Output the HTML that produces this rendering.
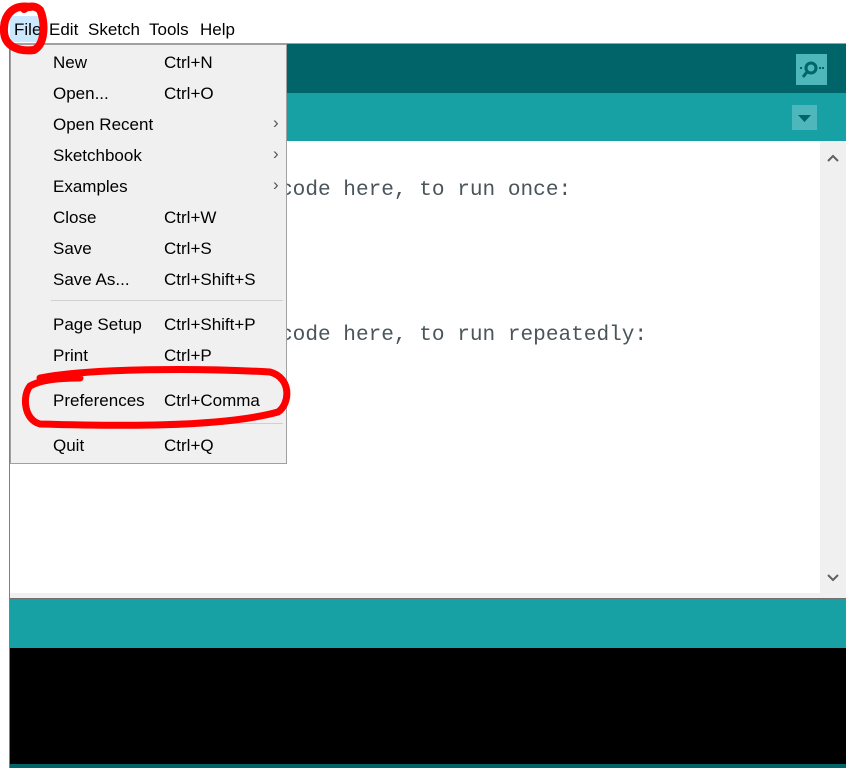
<!DOCTYPE html>
<html><head><style>
body{margin:0;width:846px;height:768px;position:relative;overflow:hidden;background:#fff;font-family:"Liberation Sans",sans-serif}
.a{position:absolute}
.menu span{position:absolute;font-size:17px;color:#000}
.code{position:absolute;font-family:"Liberation Mono",monospace;font-size:21.1px;color:#4a555a;white-space:pre}
</style></head><body>
<div class="a" style="left:9px;top:43px;width:837px;height:1px;background:#a0a0a0"></div>
<div class="a" style="left:9px;top:44px;width:1px;height:724px;background:#808080"></div>
<div class="a" style="left:10px;top:44px;width:836px;height:49px;background:#006468"></div>
<div class="a" style="left:796px;top:54px;width:31px;height:31px;background:#4db7bb"></div>
<svg class="a" style="left:796px;top:54px" width="31" height="31"><circle cx="15" cy="14" r="5" fill="none" stroke="#006468" stroke-width="3"/><line x1="11" y1="18" x2="7" y2="23" stroke="#006468" stroke-width="3"/><rect x="4" y="13" width="2" height="2" fill="#006468"/><rect x="23" y="13" width="2" height="2" fill="#006468"/><rect x="26" y="13" width="2" height="2" fill="#006468"/></svg>
<div class="a" style="left:10px;top:93px;width:836px;height:48px;background:#17a1a5"></div>
<div class="a" style="left:792px;top:105px;width:25px;height:25px;background:#4db7bb"></div>
<svg class="a" style="left:792px;top:105px" width="25" height="25"><path d="M6 10 L19 10 L12.5 17Z" fill="#006468"/></svg>
<div class="a" style="left:820px;top:141px;width:26px;height:452px;background:#f0f0f0"></div>
<svg class="a" style="left:820px;top:141px" width="26" height="452"><path d="M8 20 L13 15 L18 20" fill="none" stroke="#606060" stroke-width="2"/><path d="M8 434 L13 439 L18 434" fill="none" stroke="#606060" stroke-width="2"/></svg>
<div class="code" style="left:280px;top:178px">code here, to run once:</div>
<div class="code" style="left:280px;top:323px">code here, to run repeatedly:</div>
<div class="a" style="left:10px;top:593px;width:836px;height:5px;background:#f0f0f0"></div>
<div class="a" style="left:10px;top:598px;width:836px;height:1px;background:#707070"></div>
<div class="a" style="left:10px;top:599px;width:836px;height:49px;background:#17a1a5"></div>
<div class="a" style="left:10px;top:648px;width:836px;height:116px;background:#000"></div>
<div class="a" style="left:10px;top:764px;width:836px;height:4px;background:#006468"></div>
<!-- menubar -->
<div class="a" style="left:10px;top:16px;width:32px;height:26px;background:#cce8ff"></div>
<div class="a" style="left:14px;top:20px;font-size:17px">File</div>
<div class="a" style="left:49px;top:20px;font-size:17px">Edit</div>
<div class="a" style="left:88px;top:20px;font-size:17px">Sketch</div>
<div class="a" style="left:149px;top:20px;font-size:17px">Tools</div>
<div class="a" style="left:200px;top:20px;font-size:17px">Help</div>
<!-- menu -->
<div class="a menu" style="left:10px;top:44px;width:275px;height:418px;background:#f0f0f0;border:1px solid #a0a0a0">
<span style="left:42px;top:8px">New</span><span style="left:153px;top:8px">Ctrl+N</span>
<span style="left:42px;top:39px">Open...</span><span style="left:153px;top:39px">Ctrl+O</span>
<span style="left:42px;top:70px">Open Recent</span><span style="left:262px;top:68px;color:#555">›</span>
<span style="left:42px;top:101px">Sketchbook</span><span style="left:262px;top:99px;color:#555">›</span>
<span style="left:42px;top:132px">Examples</span><span style="left:262px;top:130px;color:#555">›</span>
<span style="left:42px;top:163px">Close</span><span style="left:153px;top:163px">Ctrl+W</span>
<span style="left:42px;top:194px">Save</span><span style="left:153px;top:194px">Ctrl+S</span>
<span style="left:42px;top:225px">Save As...</span><span style="left:153px;top:225px">Ctrl+Shift+S</span>
<div style="position:absolute;left:40px;top:255px;width:232px;height:1px;background:#d0d0d0"></div>
<span style="left:42px;top:270px">Page Setup</span><span style="left:153px;top:270px">Ctrl+Shift+P</span>
<span style="left:42px;top:301px">Print</span><span style="left:153px;top:301px">Ctrl+P</span>
<span style="left:42px;top:346px">Preferences</span><span style="left:153px;top:346px">Ctrl+Comma</span>
<div style="position:absolute;left:40px;top:378px;width:232px;height:1px;background:#d0d0d0"></div>
<span style="left:42px;top:391px">Quit</span><span style="left:153px;top:391px">Ctrl+Q</span>
</div>
<!-- red marks -->
<svg class="a" style="left:0;top:0" width="846" height="768">
<path d="M30 7 C12 4 3 16 4 32 C5 46 18 52 34 50 C46 44 45 20 40 10 C35 5 28 6 24 9" fill="none" stroke="#f00" stroke-width="8" stroke-linecap="round"/>
<path d="M40 378 C90 368 200 368 270 372 C292 378 290 404 278 412 C220 428 110 426 40 424 C24 420 22 396 30 386 C40 380 60 378 80 378" fill="none" stroke="#f00" stroke-width="7" stroke-linecap="round"/>
</svg>
</body></html>
